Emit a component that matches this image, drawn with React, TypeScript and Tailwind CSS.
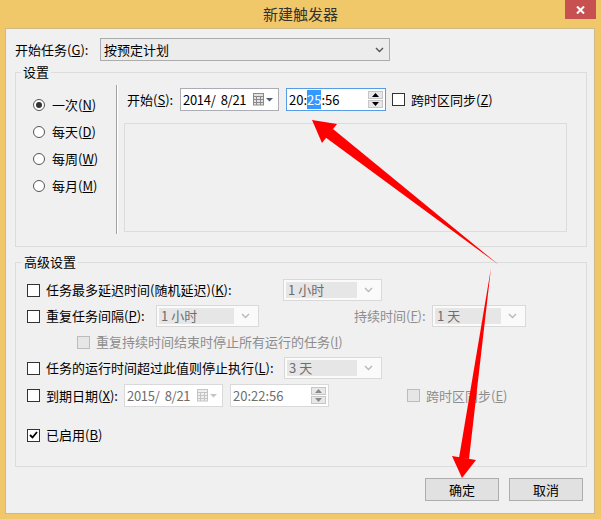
import React from "react";
import clsx from "clsx";

function Key({ k }: { k: string }) {
  return (
    <>
      (<u>{k}</u>)
    </>
  );
}

function Chevron({ disabled }: { disabled?: boolean }) {
  return (
    <svg width="9" height="6" viewBox="0 0 9 6" className="shrink-0">
      <polyline
        points="1,1 4.5,4.5 8,1"
        fill="none"
        stroke={disabled ? "#b8b8b8" : "#555"}
        strokeWidth="1.4"
      />
    </svg>
  );
}

function CalendarIcon({ disabled }: { disabled?: boolean }) {
  const line = disabled ? "#c4c4c4" : "#8a8a8a";
  return (
    <svg width="21" height="13" viewBox="0 0 21 13" className="shrink-0">
      <rect x="0.5" y="0.5" width="10" height="11.5" fill={disabled ? "#f0f0f0" : "#e4e4e4"} stroke={line} />
      <line x1="0.5" y1="3.5" x2="10.5" y2="3.5" stroke={line} />
      <line x1="0.5" y1="6.5" x2="10.5" y2="6.5" stroke={line} />
      <line x1="0.5" y1="9.5" x2="10.5" y2="9.5" stroke={line} />
      <line x1="3.5" y1="3.5" x2="3.5" y2="12" stroke={line} />
      <line x1="7.5" y1="3.5" x2="7.5" y2="12" stroke={line} />
      <polygon points="13,5 20,5 16.5,8.5" fill={disabled ? "#c4c4c4" : "#4d5a70"} />
    </svg>
  );
}

function Spinner({ disabled }: { disabled?: boolean }) {
  const fill = disabled ? "#8a8a8a" : "#000";
  return (
    <div className="flex h-full w-[15px] shrink-0 flex-col justify-center gap-[1px] py-[1px]">
      <div className="flex h-[8px] items-center justify-center border border-[#c6c6c6] bg-[#e8e8e8]">
        <svg width="7" height="4" viewBox="0 0 7 4">
          <polygon points="0,4 7,4 3.5,0" fill={fill} />
        </svg>
      </div>
      <div className="flex h-[8px] items-center justify-center border border-[#c6c6c6] bg-[#e8e8e8]">
        <svg width="7" height="4" viewBox="0 0 7 4">
          <polygon points="0,0 7,0 3.5,4" fill={fill} />
        </svg>
      </div>
    </div>
  );
}

function Check({ checked, disabled }: { checked?: boolean; disabled?: boolean }) {
  return (
    <span
      className={clsx(
        "flex h-[13px] w-[13px] shrink-0 items-center justify-center border",
        disabled ? "border-[#bcbcbc] bg-[#e6e6e6]" : "border-[#333] bg-white"
      )}
    >
      {checked && (
        <svg width="9" height="8" viewBox="0 0 9 8">
          <polyline points="1,4 3.5,6.5 8,1" fill="none" stroke="#000" strokeWidth="1.8" />
        </svg>
      )}
    </span>
  );
}

function Radio({ label, k, selected }: { label: string; k: string; selected?: boolean }) {
  return (
    <div className="flex h-[27px] items-center gap-[7px]">
      <span className="flex h-[12px] w-[12px] items-center justify-center rounded-full border border-[#555] bg-white">
        {selected && <span className="h-[6px] w-[6px] rounded-full bg-[#333]" />}
      </span>
      <span>
        {label}
        <Key k={k} />
      </span>
    </div>
  );
}

function DisabledCombo({ value, className }: { value: string; className: string }) {
  return (
    <div className={clsx("flex h-[22px] shrink-0 items-center border border-[#d9d9d9] bg-[#fafafa] p-[2px]", className)}>
      <span className="flex h-full flex-1 items-center bg-[#e6e6e6] pl-[2px] text-[#6d6d6d]">{value}</span>
      <span className="flex w-[22px] justify-center">
        <Chevron disabled />
      </span>
    </div>
  );
}

function DateBox({ value, disabled }: { value: string; disabled?: boolean }) {
  return (
    <div
      className={clsx(
        "flex h-[23px] w-[99px] shrink-0 items-center justify-between border bg-white pl-[2px] pr-[4px]",
        disabled ? "border-[#d9d9d9] text-[#6d6d6d]" : "border-[#abadb3]"
      )}
    >
      <span className="whitespace-pre tracking-[-0.3px]">{value}</span>
      <CalendarIcon disabled={disabled} />
    </div>
  );
}

export default function App() {
  return (
    <div className="relative h-[519px] w-[601px] overflow-hidden bg-[#f0c869] font-['Noto_Sans_CJK_SC','Microsoft_YaHei',sans-serif] text-[13px] leading-[16px] text-black">
      {/* 标题栏 */}
      <div className="flex h-[28px]">
        <div className="w-[36px]" />
        <div className="flex flex-1 items-center justify-center text-[15px] text-[#333]">新建触发器</div>
        <div className="mr-[5px] flex h-[19px] w-[31px] items-center justify-center bg-[#c75050]">
          <svg width="9" height="8" viewBox="0 0 9 8">
            <path d="M1 0.5 L8 7.5 M8 0.5 L1 7.5" stroke="#fff" strokeWidth="2" />
          </svg>
        </div>
      </div>

      {/* 客户区 */}
      <div className="ml-[5px] h-[486px] w-[590px] border border-[#cdb98a] bg-[#f0f0f0]">
        <div className="ml-[9px] mt-[9px] flex h-[23px] items-center">
          <span className="w-[85px]">
            开始任务<Key k="G" />:
          </span>
          <div className="flex h-[23px] w-[290px] items-center justify-between border border-[#acacac] bg-[#ececec] pl-[3px] pr-[5px]">
            <span>按预定计划</span>
            <Chevron />
          </div>
        </div>

        {/* 设置 */}
        <fieldset className="ml-[9px] mt-[3px] h-[183px] w-[572px] border border-[#dcdcdc]">
          <legend className="ml-[5px] px-[2px] leading-[16px]">设置</legend>
          <div className="flex pt-[5px]">
            <div className="w-[100px] pl-[17px] pt-[6px]">
              <Radio label="一次" k="N" selected />
              <Radio label="每天" k="D" />
              <Radio label="每周" k="W" />
              <Radio label="每月" k="M" />
            </div>
            <div className="h-[149px] w-[2px] border-l border-r border-l-[#a0a0a0] border-r-white" />
            <div className="pl-[6px]">
              <div className="mt-[3px] flex h-[23px] items-center">
                <span className="w-[56px] pl-[3px]">
                  开始<Key k="S" />:
                </span>
                <DateBox value={"2014/  8/21"} />
                <div className="ml-[7px] flex h-[23px] w-[100px] items-center justify-between border border-[#569de5] bg-white pl-[2px] pr-[2px]">
                  <span>
                    20:<span className="bg-[#3399ff] text-white">25</span>:56
                  </span>
                  <Spinner />
                </div>
                <span className="ml-[6px]">
                  <Check />
                </span>
                <span className="ml-[6px]">
                  跨时区同步<Key k="Z" />
                </span>
              </div>
              <div className="mt-[12px] h-[109px] w-[443px] border border-[#dcdcdc]" />
            </div>
          </div>
        </fieldset>

        {/* 高级设置 */}
        <fieldset className="ml-[9px] mt-[7px] h-[213px] w-[572px] border border-[#dcdcdc]">
          <legend className="ml-[6px] px-[2px] leading-[16px]">高级设置</legend>
          <div className="pl-[11px]">
            <div className="mt-[9px] flex h-[22px] items-center">
              <Check />
              <span className="ml-[6px] w-[237px]">
                任务最多延迟时间(随机延迟)<Key k="K" />:
              </span>
              <DisabledCombo value="1 小时" className="w-[99px]" />
            </div>
            <div className="mt-[4px] flex h-[22px] items-center">
              <Check />
              <span className="ml-[6px] w-[110px]">
                重复任务间隔<Key k="P" />:
              </span>
              <DisabledCombo value="1 小时" className="w-[103px]" />
              <span className="ml-[95px] w-[78px] text-[#8d8d8d]">
                持续时间<Key k="F" />:
              </span>
              <DisabledCombo value="1 天" className="w-[94px]" />
            </div>
            <div className="mt-[4px] flex h-[22px] items-center pl-[50px]">
              <Check disabled />
              <span className="ml-[6px] text-[#8d8d8d]">
                重复持续时间结束时停止所有运行的任务<Key k="I" />
              </span>
            </div>
            <div className="mt-[4px] flex h-[22px] items-center">
              <Check />
              <span className="ml-[6px] w-[238px]">
                任务的运行时间超过此值则停止执行<Key k="L" />:
              </span>
              <DisabledCombo value="3 天" className="w-[98px]" />
            </div>
            <div className="mt-[5px] flex h-[23px] items-center">
              <Check />
              <span className="ml-[6px] w-[78px]">
                到期日期<Key k="X" />:
              </span>
              <DateBox value={"2015/  8/21"} disabled />
              <div className="ml-[7px] flex h-[23px] w-[99px] items-center justify-between border border-[#d9d9d9] bg-white pl-[2px] pr-[2px] text-[#6d6d6d]">
                <span>20:22:56</span>
                <Spinner disabled />
              </div>
              <span className="ml-[78px]">
                <Check disabled />
              </span>
              <span className="ml-[6px] text-[#8d8d8d]">
                跨时区同步<Key k="E" />
              </span>
            </div>
            <div className="mt-[17px] flex h-[22px] items-center">
              <Check checked />
              <span className="ml-[6px]">
                已启用<Key k="B" />
              </span>
            </div>
          </div>
        </fieldset>

        <div className="mt-[11px] flex justify-end gap-[10px] pr-[11px]">
          <button className="flex h-[23px] w-[74px] items-center justify-center border border-[#adadad] bg-[#e1e1e1]">
            确定
          </button>
          <button className="flex h-[23px] w-[74px] items-center justify-center border border-[#adadad] bg-[#e1e1e1]">
            取消
          </button>
        </div>
      </div>

      {/* 红色标注箭头 */}
      <svg className="pointer-events-none absolute left-0 top-0" width="601" height="519" viewBox="0 0 601 519">
        <polygon points="325,137 333,129 499,265" fill="#ff0000" />
        <polygon points="312,120 337,124 322,143" fill="#ff0000" />
        <polygon points="491,268 469,459 459,458" fill="#ff0000" />
        <polygon points="452,456 476,460 462,478" fill="#ff0000" />
      </svg>
    </div>
  );
}
